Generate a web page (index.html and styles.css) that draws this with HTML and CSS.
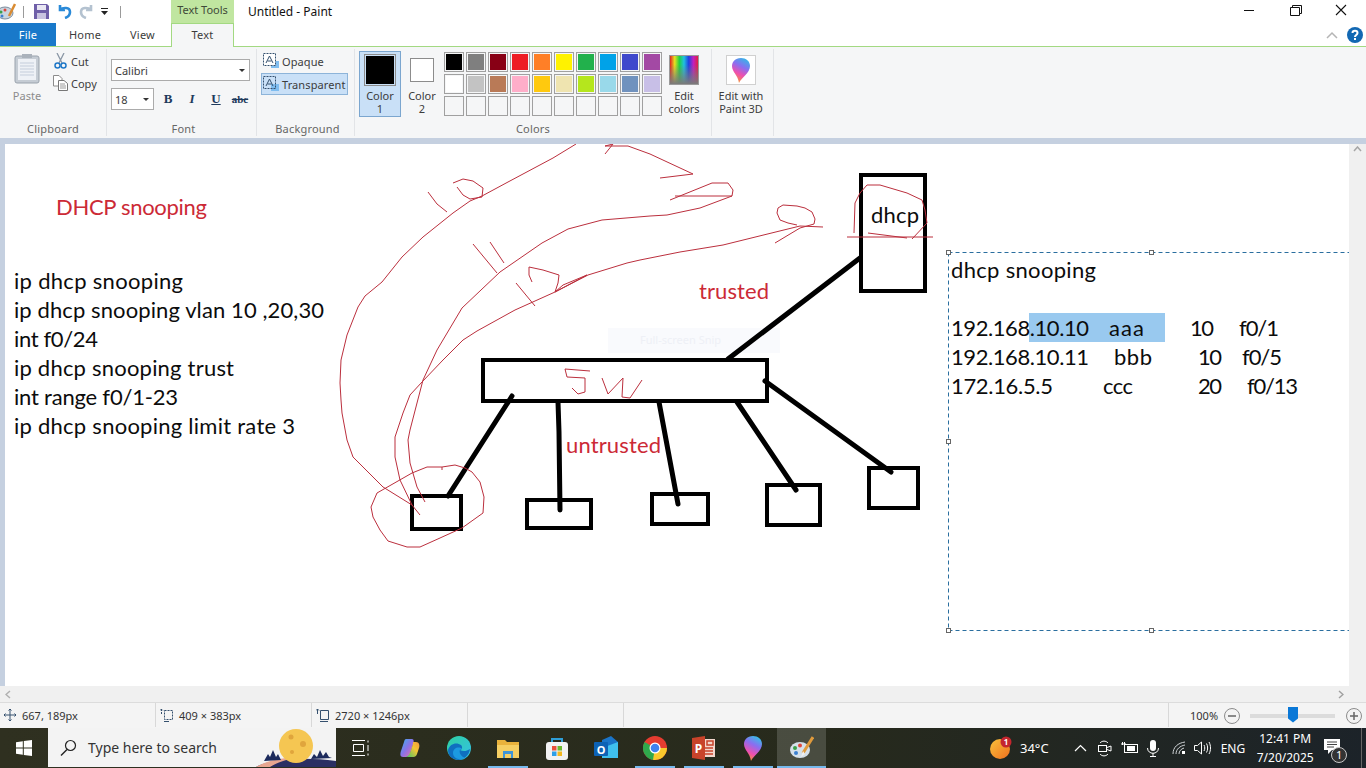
FILE: index.html
```html
<!DOCTYPE html>
<html lang="en">
<head>
    <meta charset="UTF-8">
    <title>Untitled - Paint</title>
    <link rel="stylesheet" href="styles.css">
</head>
<body>
<div class="app">
    <!-- title bar -->
    <div class="titlebar">
        <div class="qat">
            <svg class="qat-paint" width="17" height="18" viewBox="0 0 17 18">
                <ellipse cx="6" cy="11" rx="8" ry="6" fill="#c9d4de" stroke="#7d8ea0"/>
                <circle cx="2" cy="10" r="1.5" fill="#3aa04a"/>
                <circle cx="6" cy="8" r="1.5" fill="#e0483c"/>
                <circle cx="3" cy="14" r="1.5" fill="#3a7fd0"/>
                <path d="M16 2 10 14" stroke="#d98b32" stroke-width="2.5"/>
            </svg>
            <span class="qat-sep first"></span>
            <svg class="qat-save" width="15" height="15" viewBox="0 0 15 15">
                <path d="M0 0H13L15 2V15H0Z" fill="#6f5fa8"/>
                <rect x="3" y="1" width="9" height="5" fill="#e8e6f2"/>
                <rect x="3" y="9" width="9" height="6" fill="#c9c4e0"/>
            </svg>
            <svg class="qat-undo" width="15" height="15" viewBox="0 0 15 15">
                <path d="M3 1V6H8M3 6C6 3 13 3 13 8C13 11 11 13 8 14" fill="none" stroke="#2a8ad8" stroke-width="2.6"/>
            </svg>
            <svg class="qat-redo" width="15" height="15" viewBox="0 0 15 15">
                <path d="M12 1V6H7M12 6C9 3 2 3 2 8C2 11 4 13 7 14" fill="none" stroke="#b4c2d0" stroke-width="2.6"/>
            </svg>
            <svg class="qat-more" width="7" height="7" viewBox="0 0 7 7">
                <path d="M0 0H7V1H0ZM0 3H7L3.5 7Z" fill="#222"/>
            </svg>
            <span class="qat-sep"></span>
        </div>
        <div class="context-tab">Text Tools</div>
        <div class="window-title">Untitled - Paint</div>
        <div class="window-controls">
            <svg width="46" height="23" viewBox="0 0 46 23"><path d="M18 10.5H28" stroke="#111"/></svg>
            <svg width="46" height="23" viewBox="0 0 46 23"><path d="M20.5 7.5V5.5H29.5V13.5H27.5M18.5 7.5H27.5V15.5H18.5Z" fill="none" stroke="#111"/></svg>
            <svg width="46" height="23" viewBox="0 0 46 23"><path d="M18 5 28 15M28 5 18 15" stroke="#111" stroke-width="1.1"/></svg>
        </div>
    </div>

    <!-- tabs -->
    <div class="tabs">
        <div class="tab tab-file">File</div>
        <div class="tab tab-home">Home</div>
        <div class="tab tab-view">View</div>
        <div class="tab tab-text">Text</div>
        <div class="tabs-right">
            <svg width="12" height="8" viewBox="0 0 12 8"><path d="M1 7 6 2 11 7" fill="none" stroke="#b5b5b5" stroke-width="1.5"/></svg>
            <svg width="16" height="16" viewBox="0 0 16 16">
                <circle cx="8" cy="8" r="8" fill="#1268b3"/>
                <path d="M5.5 6C5.5 3 10.5 3 10.5 6C10.5 8 8 8 8 10" fill="none" stroke="#fff" stroke-width="2"/>
                <rect x="7" y="11" width="2" height="2" fill="#fff"/>
            </svg>
        </div>
    </div>

    <!-- ribbon -->
    <div class="ribbon">
        <div class="group group-clipboard">
            <div class="group-body clipboard-body">
                <div class="paste">
                    <svg width="26" height="31" viewBox="0 0 26 31">
                        <rect x="1" y="3" width="24" height="27" rx="2" fill="#c5ccd4" stroke="#9aa3ad"/>
                        <rect x="4" y="6" width="18" height="21" fill="#eef1f6"/>
                        <path d="M6 10H20M6 13H20M6 16H20M6 19H20M6 22H20" stroke="#c4cddb"/>
                        <rect x="8" y="1" width="10" height="4" fill="#aab2bb"/>
                    </svg>
                    <span>Paste</span>
                </div>
                <div class="clip-actions">
                    <div class="clip-row">
                        <svg width="13" height="16" viewBox="0 0 13 16">
                            <path d="M3 0 8 10M10 0 5 10" stroke="#8a97a5" stroke-width="1.3"/>
                            <circle cx="3.5" cy="12.5" r="2.5" fill="none" stroke="#1f78c8" stroke-width="1.5"/>
                            <circle cx="9.5" cy="12.5" r="2.5" fill="none" stroke="#1f78c8" stroke-width="1.5"/>
                        </svg>
                        <span>Cut</span>
                    </div>
                    <div class="clip-row">
                        <svg width="15" height="16" viewBox="0 0 15 16">
                            <path d="M.5.5H6L9 3.500V11H.5Z" fill="#fff" stroke="#8c8c8c"/>
                            <path d="M5.500 5.500H11L14.500 8.500V15.500H5.500Z" fill="#fff" stroke="#777"/>
                            <path d="M7 9H12M7 11H13M7 13H13" stroke="#9a9a9a"/>
                        </svg>
                        <span>Copy</span>
                    </div>
                </div>
            </div>
            <div class="group-label">Clipboard</div>
        </div>

        <div class="group group-font">
            <div class="group-body">
                <div class="select font-name"><span>Calibri</span><i class="caret"></i></div>
                <div class="font-row">
                    <div class="select font-size"><span>18</span><i class="caret"></i></div>
                    <div class="font-btn bold">B</div>
                    <div class="font-btn italic">I</div>
                    <div class="font-btn underline">U</div>
                    <div class="font-btn strike">abc</div>
                </div>
            </div>
            <div class="group-label">Font</div>
        </div>

        <div class="group group-background">
            <div class="group-body">
                <div class="bg-row">
                    <svg width="16" height="16" viewBox="0 0 16 16">
                        <rect x="8" y="8" width="8" height="7" fill="#7fbdf0"/>
                        <rect x=".5" y=".5" width="12" height="12" fill="#fff" stroke="#34506e" stroke-dasharray="2 1"/>
                        <path d="M3 10 6.500 3 10 10M4.500 8H8.500" fill="none" stroke="#34506e"/>
                    </svg>
                    <span>Opaque</span>
                </div>
                <div class="bg-row active">
                    <svg width="16" height="16" viewBox="0 0 16 16">
                        <rect x="8" y="8" width="8" height="7" fill="#7fbdf0"/>
                        <rect x=".5" y=".5" width="12" height="12" fill="none" stroke="#34506e" stroke-dasharray="2 1"/>
                        <path d="M3 10 6.500 3 10 10M4.500 8H8.500" fill="none" stroke="#34506e"/>
                    </svg>
                    <span>Transparent</span>
                </div>
            </div>
            <div class="group-label">Background</div>
        </div>

        <div class="group group-colors">
            <div class="group-body colors-body">
                <div class="color-btn active">
                    <div class="color-chip chip-black"></div>
                    <span>Color<br>1</span>
                </div>
                <div class="color-btn second">
                    <div class="color-chip chip-white"></div>
                    <span>Color<br>2</span>
                </div>
                <div class="palette">
                    <div class="cell"><b class="c-black"></b></div>
                    <div class="cell"><b class="c-gray"></b></div>
                    <div class="cell"><b class="c-maroon"></b></div>
                    <div class="cell"><b class="c-red"></b></div>
                    <div class="cell"><b class="c-orange"></b></div>
                    <div class="cell"><b class="c-yellow"></b></div>
                    <div class="cell"><b class="c-green"></b></div>
                    <div class="cell"><b class="c-sky"></b></div>
                    <div class="cell"><b class="c-indigo"></b></div>
                    <div class="cell"><b class="c-purple"></b></div>
                    <div class="cell"><b class="c-white"></b></div>
                    <div class="cell"><b class="c-silver"></b></div>
                    <div class="cell"><b class="c-brown"></b></div>
                    <div class="cell"><b class="c-pink"></b></div>
                    <div class="cell"><b class="c-gold"></b></div>
                    <div class="cell"><b class="c-cream"></b></div>
                    <div class="cell"><b class="c-lime"></b></div>
                    <div class="cell"><b class="c-aqua"></b></div>
                    <div class="cell"><b class="c-steel"></b></div>
                    <div class="cell"><b class="c-lilac"></b></div>
                    <div class="cell"></div><div class="cell"></div><div class="cell"></div><div class="cell"></div><div class="cell"></div>
                    <div class="cell"></div><div class="cell"></div><div class="cell"></div><div class="cell"></div><div class="cell"></div>
                </div>
                <div class="edit-colors">
                    <div class="rainbow"></div>
                    <span>Edit<br>colors</span>
                </div>
            </div>
            <div class="group-label">Colors</div>
        </div>

        <div class="group group-3d">
            <div class="group-body paint3d">
                <div class="paint3d-btn">
                    <svg width="18" height="25" viewBox="0 0 18 25">
                        <defs>
                            <linearGradient id="balloonA" x1="0.7" y1="0" x2="0.3" y2="1">
                                <stop offset="0" stop-color="#35b6e8"/>
                                <stop offset="0.35" stop-color="#8a6ef0"/>
                                <stop offset="0.65" stop-color="#ee4fb0"/>
                                <stop offset="1" stop-color="#f59a2a"/>
                            </linearGradient>
                        </defs>
                        <path d="M9 0C3 0 0 4 0 8C0 14 6 17 7 25C9 20 18 15 18 8C18 3 14 0 9 0Z" fill="url(#balloonA)"/>
                    </svg>
                </div>
                <span>Edit with<br>Paint 3D</span>
            </div>
        </div>
    </div>

    <!-- drawing area -->
    <div class="workspace">
        <div class="canvas">
            <svg class="drawing" width="1344" height="542" viewBox="5 144 1344 542">
                <rect class="snip-box" x="608" y="328" width="172" height="25"/>
                <text class="snip-text" x="640" y="344">Full-screen Snip</text>

                <rect class="selected" x="1029" y="313" width="136" height="29"/>

                <!-- black boxes and links -->
                <rect class="ink" x="861" y="175" width="64" height="116"/>
                <rect class="ink" x="483" y="360" width="284" height="41"/>
                <rect class="ink" x="412" y="496" width="49" height="33"/>
                <rect class="ink" x="527" y="500" width="64" height="28"/>
                <rect class="ink" x="652" y="494" width="56" height="30"/>
                <rect class="ink" x="767" y="485" width="53" height="40"/>
                <rect class="ink" x="869" y="468" width="49" height="40"/>
                <path class="ink" d="M728 359 860 258"/>
                <path class="ink" d="M512 396 448 496"/>
                <path class="ink" d="M558 402 559 432 560 510"/>
                <path class="ink" d="M659 402 678 504"/>
                <path class="ink" d="M737 402 796 490"/>
                <path class="ink" d="M765 381 891 472"/>

                <!-- red pen -->
                <path class="pen" d="M576 144 553 158 508 182 482 196 470 201 453 213 423 237 402 257 382 282 365 296 358 307 347 335 341 360 340 383 341 400 342 413 347 440 353 457 383 487 412 505 420 515"/>
                <path class="pen" d="M650 216 602 220 568 229 542 243 500 272 462 308 437 350 423 380 417 403 410 430 408 440 410 463 417 487 425 502"/>
                <path class="pen" d="M823 227 800 226 723 245 680 252 640 260 627 263 588 275 555 292 515 310 477 331 463 340 443 360 422 382 410 395 403 413 395 437 395 457 400 480 412 505"/>
                <path class="pen" d="M775 243 800 228 807 226 814 224 815 219 812 212 805 208 797 206 783 205 778 208 777 213 780 220 788 223 797 225"/>
                <path class="pen" d="M605 154 613 144 605 146H628L650 154 693 174 660 178"/>
                <path class="pen" d="M670 200 712 183H728L733 190 732 196H675M732 196 700 208 667 215 650 216"/>
                <path class="pen" d="M428 192 437 204 447 212M453 183 463 179 473 181 483 188 482 197 470 199 463 195 457 187"/>
                <path class="pen" d="M473 244 497 273M490 242 504 263"/>
                <path class="pen" d="M516 283 535 306M532 282 529 275V267L543 270 559 275 558 283 555 292 563 285 587 275 570 284 555 292"/>
                <path class="pen" d="M442 470V467L455 465 465 468 472 472 480 482 484 497 483 513 462 528 440 538 420 547H407L388 541 380 530 373 517 371 507 377 493 412 473 427 467H442"/>
                <path class="pen" d="M590 371 565 369 567 377 585 378V392L578 394 572 388"/>
                <path class="pen" d="M602 378 608 394 623 378 622 397 630 398 642 380"/>
                <path class="pen" d="M854 233 855 203 860 193 867 185H880L907 193 922 200 925 210 927 223 912 239"/>
                <path class="pen" d="M847 237H933M868 233 907 238"/>

                <!-- typed text -->
                <text class="label red" x="56" y="215" textLength="151">DHCP snooping</text>
                <text class="label" x="14" y="289" textLength="169">ip dhcp snooping</text>
                <text class="label" x="14" y="318" textLength="310">ip dhcp snooping vlan 10 ,20,30</text>
                <text class="label" x="14" y="347" textLength="84">int f0/24</text>
                <text class="label" x="14" y="376" textLength="220">ip dhcp snooping trust</text>
                <text class="label" x="14" y="405" textLength="164">int range f0/1-23</text>
                <text class="label" x="14" y="434" textLength="281">ip dhcp snooping limit rate 3</text>

                <text class="label" x="871" y="223" textLength="48">dhcp</text>
                <text class="label red" x="699" y="299" textLength="70">trusted</text>
                <text class="label red" x="566" y="453" textLength="95">untrusted</text>

                <text class="label" x="951" y="278" textLength="145">dhcp snooping</text>
                <text class="label" x="951" y="336" textLength="138">192.168.10.10</text>
                <text class="label" x="1109" y="336" textLength="35">aaa</text>
                <text class="label" x="1190" y="336" textLength="24">10</text>
                <text class="label" x="1239" y="336" textLength="40">f0/1</text>
                <text class="label" x="951" y="365" textLength="138">192.168.10.11</text>
                <text class="label" x="1114" y="365" textLength="38">bbb</text>
                <text class="label" x="1198" y="365" textLength="24">10</text>
                <text class="label" x="1242" y="365" textLength="40">f0/5</text>
                <text class="label" x="951" y="394" textLength="102">172.16.5.5</text>
                <text class="label" x="1103" y="394" textLength="30">ccc</text>
                <text class="label" x="1198" y="394" textLength="24">20</text>
                <text class="label" x="1247" y="394" textLength="51">f0/13</text>

                <!-- text box selection -->
                <path class="marquee" d="M948.5 252.500H1349M948.5 252.500V630.500H1349"/>
                <rect class="handle" x="946.500" y="250.500" width="4" height="4"/>
                <rect class="handle" x="1149.500" y="250.500" width="4" height="4"/>
                <rect class="handle" x="946.500" y="439.500" width="4" height="4"/>
                <rect class="handle" x="946.500" y="628.500" width="4" height="4"/>
                <rect class="handle" x="1149.500" y="628.500" width="4" height="4"/>
            </svg>
        </div>
        <div class="vscroll">
            <svg width="9" height="6" viewBox="0 0 9 6"><path d="M1 5 4.500 1 8 5" fill="none" stroke="#a6a6a6" stroke-width="1.500"/></svg>
        </div>
    </div>

    <div class="hscroll">
        <svg width="6" height="9" viewBox="0 0 6 9"><path d="M5 1 1 4.500 5 8" fill="none" stroke="#b0b0b0" stroke-width="1.500"/></svg>
        <svg width="6" height="9" viewBox="0 0 6 9"><path d="M1 1 5 4.500 1 8" fill="none" stroke="#a0a0a0" stroke-width="1.500"/></svg>
    </div>

    <!-- status bar -->
    <div class="statusbar">
        <div class="status-cell">
            <svg width="12" height="12" viewBox="0 0 12 12"><path d="M6 0V12M0 6H12M4.500 1.500 6 0 7.500 1.500M4.500 10.500 6 12 7.500 10.500M1.500 4.500 0 6 1.500 7.500M10.500 4.500 12 6 10.500 7.500" fill="none" stroke="#35506e"/></svg>
            <span>667, 189px</span>
        </div>
        <div class="status-cell">
            <svg width="13" height="13" viewBox="0 0 13 13"><path d="M1.500 0V5M0 1.500 1.500 0 3 1.500M4.500 1.500H12.500V10.500H4.500Z" fill="none" stroke="#35506e" stroke-dasharray="2 1"/><path d="M4 12.500H9" stroke="#35506e"/></svg>
            <span>409 × 383px</span>
        </div>
        <div class="status-cell">
            <svg width="13" height="13" viewBox="0 0 13 13"><path d="M1.500 0V5M0 1.500 1.500 0 3 1.500M4.500 1.500H12.500V10.500H4.500Z" fill="none" stroke="#35506e"/><path d="M4 12.500H12" stroke="#35506e"/></svg>
            <span>2720 × 1246px</span>
        </div>
        <div class="status-cell"></div>
        <div class="status-fill"></div>
        <div class="zoom-cell">
            <span class="zoom-value">100%</span>
            <svg width="16" height="16" viewBox="0 0 16 16"><circle cx="8" cy="8" r="7.500" fill="#f3f3f3" stroke="#8c8c8c"/><path d="M4 8H12" stroke="#666" stroke-width="1.500"/></svg>
            <div class="zoom-track"><i class="zoom-thumb"></i></div>
            <svg width="16" height="16" viewBox="0 0 16 16"><circle cx="8" cy="8" r="7.500" fill="#f3f3f3" stroke="#8c8c8c"/><path d="M4 8H12M8 4V12" stroke="#666" stroke-width="1.500"/></svg>
        </div>
    </div>

    <!-- taskbar -->
    <div class="taskbar">
        <div class="start">
            <svg width="16" height="16" viewBox="0 0 16 16"><path d="M0 2.200 6.800 1.200V7.500H0ZM7.800 1 16 0V7.500H7.800ZM0 8.500H6.800V14.800L0 13.800ZM7.800 8.500H16V16L7.800 15Z" fill="#fff"/></svg>
        </div>
        <div class="search">
            <svg width="17" height="17" viewBox="0 0 17 17"><circle cx="10.500" cy="6.500" r="5" fill="none" stroke="#222" stroke-width="1.200"/><path d="M7 10.500 1 16.500" stroke="#222" stroke-width="1.400"/></svg>
            <span>Type here to search</span>
            <svg class="search-art" width="80" height="39" viewBox="0 0 80 39">
                <path d="M0 39C12 32 45 28 80 33V39Z" fill="#2b2f63"/>
                <path d="M0 39C12 32 30 29 45 29C30 31 20 35 14 39Z" fill="#e8a690"/>
                <circle cx="40" cy="18" r="17" fill="#f5c652"/>
                <circle cx="35" cy="9" r="2.500" fill="#e0a53c"/>
                <circle cx="47" cy="16" r="3" fill="#e0a53c"/>
                <circle cx="36" cy="24" r="2" fill="#e0a53c"/>
                <path d="M8 33 12 26 14 29 17 22 20 29 22 26 25 32Z" fill="#1c2a5c"/>
                <path d="M55 31 58 26 61 29 64 22 67 28 70 24 73 29 76 30Z" fill="#1c2a5c"/>
            </svg>
        </div>
        <div class="task-item">
            <svg width="18" height="16" viewBox="0 0 18 16"><path d="M0 .5H13M0 15.500H13M1.500 4.500H11.500V11.500H1.500ZM16 .5V2.500M16 5V11M16 13.500V15.500" fill="none" stroke="#fff"/></svg>
        </div>
        <div class="task-item">
            <svg width="22" height="22" viewBox="0 0 22 22">
                <defs>
                    <linearGradient id="copA" x1="0" y1="0" x2="1" y2="1">
                        <stop offset="0" stop-color="#37b3ee"/><stop offset="0.5" stop-color="#8a72e8"/><stop offset="1" stop-color="#f06fa0"/>
                    </linearGradient>
                    <linearGradient id="copB" x1="0" y1="1" x2="1" y2="0">
                        <stop offset="0" stop-color="#3fc46a"/><stop offset="0.6" stop-color="#f4c534"/><stop offset="1" stop-color="#f39a3c"/>
                    </linearGradient>
                </defs>
                <path d="M7 2H13C15 2 15 5 14 8L11 17C10 20 8 20 6 20H4C1 20 1 17 2 14L5 5C5.500 3 6 2 7 2Z" fill="url(#copA)"/>
                <path d="M14 5H17C20 5 21 8 20 11L18 17C17 20 15 20 13 20H7C10 19 11 16 12 13L14 7Z" fill="url(#copB)"/>
            </svg>
        </div>
        <div class="task-item">
            <svg width="24" height="24" viewBox="0 0 24 24">
                <defs>
                    <linearGradient id="edgeA" x1="0" y1="0" x2="1" y2="1">
                        <stop offset="0" stop-color="#2ed0a0"/><stop offset="1" stop-color="#35c0e8"/>
                    </linearGradient>
                </defs>
                <circle cx="12" cy="12" r="12" fill="url(#edgeA)"/>
                <path d="M1 14C3 7 10 6 14 9C16 11 15 14 13 14C16 16 20 15 23 13C22 20 16 24 11 24C5 23 1 20 1 14Z" fill="#0f6fc0"/>
                <path d="M6 17C6 12 12 10 15 13C11 13 12 20 18 22C12 25 6 22 6 17Z" fill="#1c9ae0"/>
            </svg>
        </div>
        <div class="task-item running">
            <svg width="22" height="20" viewBox="0 0 22 20">
                <path d="M0 2H8L10 4H22V20H0Z" fill="#e9b23c"/>
                <rect x="0" y="7" width="22" height="13" fill="#f6cf63"/>
                <rect x="6" y="13" width="10" height="7" fill="#3f95d8"/>
                <rect x="8" y="16" width="6" height="4" fill="#f6cf63"/>
            </svg>
        </div>
        <div class="task-item">
            <svg width="24" height="24" viewBox="0 0 24 24">
                <path d="M7 7V3H17V7" fill="none" stroke="#2f9fd8" stroke-width="2"/>
                <rect x="1" y="6" width="22" height="18" rx="3" fill="#f2f2f2"/>
                <rect x="7" y="10" width="4.500" height="4.500" fill="#e8503a"/>
                <rect x="12.500" y="10" width="4.500" height="4.500" fill="#6ab82e"/>
                <rect x="7" y="15.500" width="4.500" height="4.500" fill="#2e9fe8"/>
                <rect x="12.500" y="15.500" width="4.500" height="4.500" fill="#f4b81e"/>
            </svg>
        </div>
        <div class="task-item">
            <svg width="24" height="24" viewBox="0 0 24 24">
                <path d="M8 4 17 0 24 6V22H8Z" fill="#1a74c8"/>
                <path d="M8 12 24 6V22H8Z" fill="#3fc0ee"/>
                <rect x="0" y="6" width="14" height="14" rx="1" fill="#0d62b5"/>
                <text class="outlook-o" x="7" y="17.500">O</text>
            </svg>
        </div>
        <div class="task-item running">
            <svg width="24" height="24" viewBox="0 0 24 24">
                <circle cx="12" cy="12" r="12" fill="#e53c30"/>
                <path d="M12 12 1.600 6A12 12 0 0 0 12 24L18 13.500Z" fill="#2fa84c"/>
                <path d="M12 12H24A12 12 0 0 1 10 23.800Z" fill="#f9c82c"/>
                <circle cx="12" cy="12" r="5.500" fill="#fff"/>
                <circle cx="12" cy="12" r="4.300" fill="#3f82ee"/>
            </svg>
        </div>
        <div class="task-item running">
            <svg width="23" height="24" viewBox="0 0 23 24">
                <rect x="8" y="3" width="15" height="18" fill="#f3d6cc"/>
                <path d="M15 5H21V9H15ZM11 12H21M11 15H21M11 18H21" fill="none" stroke="#c8432a" stroke-width="1.500"/>
                <path d="M0 2 13 0V24L0 22Z" fill="#c8432a"/>
                <text class="ppt-p" x="6.500" y="16.500">P</text>
            </svg>
        </div>
        <div class="task-item running">
            <svg width="18" height="25" viewBox="0 0 18 25">
                <defs>
                    <linearGradient id="balloonB" x1="0.7" y1="0" x2="0.3" y2="1">
                        <stop offset="0" stop-color="#35c0e8"/>
                        <stop offset="0.35" stop-color="#8a6ef0"/>
                        <stop offset="0.7" stop-color="#ee4fb0"/>
                        <stop offset="1" stop-color="#f59a2a"/>
                    </linearGradient>
                </defs>
                <path d="M9 0C3 0 0 4 0 8C0 14 6 17 7 25C9 20 18 15 18 8C18 3 14 0 9 0Z" fill="url(#balloonB)"/>
            </svg>
        </div>
        <div class="task-item current">
            <svg width="24" height="24" viewBox="0 0 24 24">
                <ellipse cx="10" cy="14" rx="10" ry="8" fill="#d5e0ea"/>
                <circle cx="5" cy="12" r="2" fill="#3aa04a"/>
                <circle cx="10" cy="9.500" r="2" fill="#e0483c"/>
                <circle cx="6" cy="17" r="2" fill="#3a7fd0"/>
                <path d="M23 1 13 17" stroke="#e09a3c" stroke-width="3"/>
                <path d="M13 15 11 21 15 18Z" fill="#f0f0f0"/>
            </svg>
        </div>

        <div class="tray">
            <div class="weather">
                <svg width="22" height="24" viewBox="0 0 22 24">
                    <defs>
                        <linearGradient id="sunA" x1="0" y1="0" x2="1" y2="1">
                            <stop offset="0" stop-color="#f8c23c"/><stop offset="1" stop-color="#f0701e"/>
                        </linearGradient>
                    </defs>
                    <circle cx="10" cy="13" r="10" fill="url(#sunA)"/>
                    <circle cx="16" cy="6" r="5.500" fill="#c4262e"/>
                    <text class="weather-badge" x="16" y="9">1</text>
                </svg>
                <span>34°C</span>
            </div>
            <svg class="tray-chevron" width="13" height="8" viewBox="0 0 13 8"><path d="M1 7 6.500 1.500 12 7" fill="none" stroke="#fff" stroke-width="1.200"/></svg>
            <svg class="tray-meet" width="14" height="17" viewBox="0 0 14 17"><path d="M2 3C4 .5 8 .5 10 3M2 14C4 16.500 8 16.500 10 14" fill="none" stroke="#fff"/><rect x=".5" y="5.500" width="8" height="6" fill="none" stroke="#fff"/><path d="M9 7.500 13 6V11L9 9.500" fill="none" stroke="#fff"/></svg>
            <svg class="tray-battery" width="17" height="12" viewBox="0 0 17 12"><rect x="3.500" y="2.500" width="13" height="8" fill="none" stroke="#fff"/><rect x="6" y="4" width="8" height="5" fill="#fff"/><path d="M0 2H5M1.500 0V3M3.500 0V3" stroke="#fff"/></svg>
            <svg class="tray-mic" width="12" height="17" viewBox="0 0 12 17"><rect x="3" y="0" width="6" height="11" rx="3" fill="#fff"/><path d="M.5 8C.5 15 11.500 15 11.500 8M6 13V16.500M3 16.500H9" fill="none" stroke="#fff"/></svg>
            <svg class="tray-wifi" width="15" height="14" viewBox="0 0 15 14"><path d="M1 13C1 6 6 2 13 1M4 13C4 8 8 5 13 4M7 13C7 10 9 8 12 7" fill="none" stroke="#cfd3d6"/><rect x="10" y="10" width="3" height="3" fill="#fff"/></svg>
            <svg class="tray-volume" width="17" height="14" viewBox="0 0 17 14"><path d="M.5 4.500H3.500L7.500 1V13L3.500 9.500H.5Z" fill="none" stroke="#fff"/><path d="M10 4C11 6 11 8 10 10M12.500 2.500C14 5 14 9 12.500 11.500M15 1C17 4.500 17 9.500 15 13" fill="none" stroke="#fff"/></svg>
            <span class="tray-lang">ENG</span>
            <div class="clock"><span>12:41 PM</span><span>7/20/2025</span></div>
            <div class="notify">
                <svg width="16" height="15" viewBox="0 0 16 15"><path d="M0 0H16V11H8L4 15V11H0Z" fill="#fff"/><path d="M3 3H13M3 5.500H13M3 8H10" stroke="#444"/></svg>
                <span class="notify-count">1</span>
            </div>
            <div class="show-desktop"></div>
        </div>
    </div>
</div>
</body>
</html>
```

FILE: styles.css
```css
* {
    box-sizing: border-box;
}
body {
    margin: 0;
    width: 1366px;
    height: 768px;
    overflow: hidden;
    font-family: "Noto Sans", sans-serif;
    font-size: 11px;
    color: #3c3c3c;
    background: white;
}
.app {
    display: flex;
    flex-direction: column;
    height: 768px;
}

/* title bar */
.titlebar {
    display: flex;
    height: 23px;
    background: white;
}
.qat {
    display: flex;
    align-items: center;
    width: 171px;
    height: 23px;
}
.qat-paint {
    flex: none;
    margin-left: -1px;
    margin-top: -1px;
}
.qat-sep {
    width: 1px;
    height: 12px;
    background: #9a9a9a;
    margin-left: 12px;
}
.qat-sep.first {
    margin-left: 7px;
}
.qat-save {
    margin-left: 10px;
}
.qat-undo {
    margin-left: 8px;
}
.qat-redo {
    margin-left: 7px;
}
.qat-more {
    margin-left: 7px;
}
.context-tab {
    width: 63px;
    background: #c0e6a0;
    text-align: center;
    line-height: 20px;
    color: #3f4a38;
}
.window-title {
    margin-left: 14px;
    font-size: 12px;
    line-height: 23px;
    color: #111;
}
.window-controls {
    display: flex;
    margin-left: auto;
    padding-right: 2px;
}

/* tabs */
.tabs {
    display: flex;
    height: 24px;
    border-bottom: 1px solid #a3d982;
    background: white;
}
.tab {
    text-align: center;
    line-height: 23px;
    font-size: 11px;
    letter-spacing: 0.2px;
}
.tab-file {
    width: 56px;
    height: 23px;
    background: #1979ca;
    color: white;
}
.tab-home {
    width: 58px;
}
.tab-view {
    width: 57px;
}
.tab-text {
    width: 63px;
    height: 24px;
    background: #f5f6f7;
    border: 1px solid #a3d982;
    border-bottom: none;
    line-height: 22px;
}
.tabs-right {
    display: flex;
    align-items: center;
    gap: 9px;
    margin-left: auto;
    padding-right: 3px;
}

/* ribbon */
.ribbon {
    display: flex;
    height: 91px;
    padding-top: 2px;
    background: #f5f6f7;
}
.group {
    display: flex;
    flex-direction: column;
    height: 87px;
    border-right: 1px solid #e2e4e7;
}
.group-body {
    flex: 1;
}
.group-label {
    height: 14px;
    text-align: center;
    line-height: 14px;
    color: #666;
    letter-spacing: 0.2px;
}
.group-clipboard {
    width: 107px;
}
.clipboard-body {
    display: flex;
    padding-left: 10px;
}
.paste {
    display: flex;
    flex-direction: column;
    align-items: center;
    width: 34px;
    padding-top: 4px;
    color: #8c8c8c;
}
.paste span {
    margin-top: 4px;
}
.clip-actions {
    padding-top: 1px;
    margin-left: 9px;
}
.clip-row {
    display: flex;
    align-items: center;
    height: 22px;
    gap: 3px;
}
.clip-row svg {
    width: 15px;
}
.group-font {
    width: 150px;
    padding-left: 4px;
}
.select {
    display: flex;
    align-items: center;
    justify-content: space-between;
    height: 22px;
    padding: 0 4px 0 3px;
    background: white;
    border: 1px solid #ababab;
}
.font-name {
    width: 139px;
    margin-top: 10px;
}
.font-row {
    display: flex;
    align-items: center;
    margin-top: 7px;
}
.font-size {
    width: 43px;
}
.caret {
    width: 0;
    height: 0;
    border-left: 3px solid transparent;
    border-right: 3px solid transparent;
    border-top: 3px solid #333;
}
.font-btn {
    width: 24px;
    text-align: center;
    font-family: "Liberation Serif", serif;
    font-size: 13px;
    color: #1e3a5c;
}
.font-btn.bold {
    margin-left: 2px;
    font-weight: bold;
}
.font-btn.italic {
    font-style: italic;
    font-weight: bold;
}
.font-btn.underline {
    font-weight: bold;
    text-decoration: underline;
}
.font-btn.strike {
    text-decoration: line-through;
    font-size: 11px;
    font-weight: bold;
}
.group-background {
    width: 98px;
    padding-left: 4px;
}
.bg-row {
    display: flex;
    align-items: center;
    gap: 3px;
    width: 87px;
    height: 22px;
    padding-left: 2px;
    margin-top: 1px;
    letter-spacing: 0.1px;
}
.bg-row.active {
    margin-top: 1px;
    background: #c9e0f7;
    border: 1px solid #8db4d9;
    padding-left: 1px;
}
.group-colors {
    width: 357px;
}
.colors-body {
    display: flex;
    padding: 2px 0 0 4px;
}
.color-btn {
    display: flex;
    flex-direction: column;
    align-items: center;
    width: 42px;
    height: 66px;
    text-align: center;
    line-height: 13px;
}
.color-btn.active {
    background: #c9e0f7;
    border: 1px solid #7ba6cf;
    padding-top: 2px;
}
.color-btn.second {
    padding-top: 7px;
}
.color-btn span {
    margin-top: 3px;
}
.color-btn.second span {
    margin-top: 7px;
}
.color-chip {
    flex: none;
    border: 1px solid #8c8c8c;
}
.chip-black {
    width: 32px;
    height: 32px;
    background: black;
    outline: 1px solid #c9e0f7;
    outline-offset: -2px;
}
.chip-white {
    width: 24px;
    height: 24px;
    background: white;
}
.palette {
    display: grid;
    grid-template-columns: repeat(10, 20px);
    grid-auto-rows: 20px;
    gap: 2px;
    margin: 1px 0 0 1px;
}
.cell {
    border: 1px solid #a0a0a0;
    padding: 1px;
}
.cell b {
    display: block;
    height: 100%;
}
.c-black { background: #000000; }
.c-gray { background: #7f7f7f; }
.c-maroon { background: #880015; }
.c-red { background: #ed1c24; }
.c-orange { background: #ff7f27; }
.c-yellow { background: #fff200; }
.c-green { background: #22b14c; }
.c-sky { background: #00a2e8; }
.c-indigo { background: #3f48cc; }
.c-purple { background: #a349a4; }
.c-white { background: #ffffff; }
.c-silver { background: #c3c3c3; }
.c-brown { background: #b97a57; }
.c-pink { background: #ffaec9; }
.c-gold { background: #ffc90e; }
.c-cream { background: #efe4b0; }
.c-lime { background: #b5e61d; }
.c-aqua { background: #99d9ea; }
.c-steel { background: #7092be; }
.c-lilac { background: #c8bfe7; }
.edit-colors {
    display: flex;
    flex-direction: column;
    align-items: center;
    width: 44px;
    padding-top: 4px;
    text-align: center;
    line-height: 13px;
}
.edit-colors span {
    margin-top: 4px;
}
.rainbow {
    width: 30px;
    height: 30px;
    border: 1px solid #9a9a9a;
    background: linear-gradient(to bottom, transparent 30%, #7a7a7a 100%),
        linear-gradient(to right, #e02020, #e8e020, #20d040, #20c0e0, #2040e0, #c020c0, #e02040);
}
.group-3d {
    width: 62px;
}
.paint3d {
    display: flex;
    flex-direction: column;
    align-items: center;
    width: 58px;
    padding-top: 6px;
    text-align: center;
    line-height: 13px;
}
.paint3d span {
    margin-top: 4px;
    white-space: nowrap;
}
.paint3d-btn {
    display: flex;
    align-items: center;
    justify-content: center;
    width: 30px;
    height: 30px;
    background: white;
    border: 1px solid #d0d0d0;
}

/* drawing area */
.workspace {
    display: flex;
    height: 548px;
    padding: 6px 0 0 5px;
    background: #c5d0e0;
}
.canvas {
    width: 1344px;
    height: 542px;
    background: white;
}
.drawing {
    display: block;
}
.vscroll {
    flex: 1;
    display: flex;
    justify-content: center;
    padding-top: 2px;
    background: #f0f0f0;
}
.ink {
    fill: none;
    stroke: black;
    stroke-width: 5;
    stroke-linecap: round;
}
rect.ink {
    stroke-width: 4;
}
.pen {
    fill: none;
    stroke: #bb2f3d;
    stroke-width: 1;
    stroke-linejoin: round;
}
.label {
    font-family: Lato, sans-serif;
    font-size: 22px;
    fill: #0c0c0c;
}
.label.red {
    fill: #cc2a36;
}
.selected {
    fill: #99c9ef;
}
.snip-box {
    fill: #f9fafd;
}
.snip-text {
    font-size: 11px;
    fill: #eef0f6;
}
.marquee {
    fill: none;
    stroke: #2a6e9f;
    stroke-dasharray: 4 3;
}
.handle {
    fill: white;
    stroke: #666;
}

/* scrollbar and status bar */
.hscroll {
    display: flex;
    align-items: center;
    justify-content: space-between;
    height: 16px;
    padding: 0 22px 0 5px;
    background: #f0f0f0;
}
.statusbar {
    display: flex;
    height: 26px;
    background: #f4f4f4;
    border-top: 1px solid #dcdcdc;
    font-size: 11px;
    color: #333;
}
.status-cell {
    display: flex;
    align-items: center;
    gap: 6px;
    width: 156px;
    padding-left: 4px;
    border-right: 1px solid #d8d8d8;
    margin-bottom: 1px;
}
.status-fill {
    width: 545px;
    border-right: 1px solid #d8d8d8;
    margin-bottom: 1px;
}
.zoom-cell {
    display: flex;
    align-items: center;
    flex: 1;
    padding-left: 21px;
}
.zoom-value {
    width: 34px;
}
.zoom-track {
    position: relative;
    width: 85px;
    height: 4px;
    margin: 0 11px 0 10px;
    background: #dcdcdc;
}
.zoom-thumb {
    position: absolute;
    left: 38px;
    top: -7px;
    width: 10px;
    height: 16px;
    background: #0a78d7;
    clip-path: polygon(0 0, 100% 0, 100% 75%, 50% 100%, 0 75%);
}

/* taskbar */
.taskbar {
    display: flex;
    height: 40px;
    background: linear-gradient(to right, #2f3020, #272a1c 60%, #1c2329);
    color: white;
}
.start {
    display: flex;
    align-items: center;
    justify-content: center;
    width: 48px;
}
.search {
    display: flex;
    align-items: center;
    width: 288px;
    height: 39px;
    padding-left: 12px;
    background: #f3f3f3;
    font-size: 14px;
    color: #333;
    overflow: hidden;
}
.search span {
    margin-left: 11px;
    white-space: nowrap;
}
.search-art {
    margin-left: auto;
    flex: none;
}
.task-item {
    display: flex;
    align-items: center;
    justify-content: center;
    width: 49px;
    height: 40px;
}
.task-item.running {
    background: linear-gradient(#76b9ed, #76b9ed) center bottom / 40px 2px no-repeat;
}
.task-item.current {
    background: linear-gradient(#76b9ed, #76b9ed) center bottom / 100% 2px no-repeat, rgba(255, 255, 255, 0.16);
}
.outlook-o {
    font-size: 11px;
    font-weight: bold;
    fill: white;
    text-anchor: middle;
}
.ppt-p {
    font-size: 12px;
    font-weight: bold;
    fill: white;
    text-anchor: middle;
}
.tray {
    display: flex;
    align-items: center;
    flex: 1;
    font-size: 12px;
}
.weather {
    display: flex;
    align-items: center;
    gap: 8px;
    margin-left: 164px;
    font-size: 13px;
}
.weather-badge {
    font-size: 8px;
    font-weight: bold;
    fill: white;
    text-anchor: middle;
}
.tray-chevron {
    margin-left: 25px;
}
.tray-meet {
    margin-left: 11px;
}
.tray-battery {
    margin-left: 9px;
}
.tray-mic {
    margin-left: 9px;
}
.tray-wifi {
    margin-left: 13px;
}
.tray-volume {
    margin-left: 7px;
}
.tray-lang {
    margin-left: 10px;
}
.clock {
    display: flex;
    flex-direction: column;
    align-items: center;
    width: 70px;
    margin-left: 5px;
    line-height: 19px;
}
.notify {
    position: relative;
    margin-left: 4px;
    height: 15px;
    margin-top: -3px;
}
.notify-count {
    position: absolute;
    left: 7px;
    top: 8px;
    width: 16px;
    height: 16px;
    border: 1px solid #c8c8c8;
    border-radius: 50%;
    background: #333;
    text-align: center;
    line-height: 14px;
    font-size: 11px;
}
.show-desktop {
    width: 1px;
    height: 40px;
    margin-left: auto;
    margin-right: 4px;
    background: #666;
}
```
